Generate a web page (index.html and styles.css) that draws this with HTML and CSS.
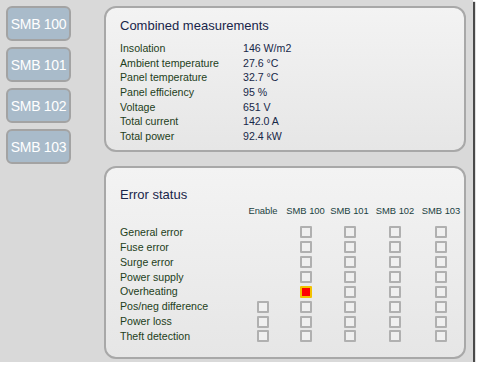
FILE: index.html
```html
<!DOCTYPE html>
<html lang="en">
<head>
    <meta charset="UTF-8">
    <title>SMB monitor</title>
    <link rel="stylesheet" href="styles.css">
</head>
<body>
<div class="frame">
    <div class="sidebar">
        <div class="smbbtn">SMB 100</div>
        <div class="smbbtn">SMB 101</div>
        <div class="smbbtn">SMB 102</div>
        <div class="smbbtn">SMB 103</div>
    </div>

    <div class="main">
        <div class="panel measure">
            <h2 class="ptitle">Combined measurements</h2>
            <div class="mrow"><span class="lbl">Insolation</span><span class="val">146 W/m2</span></div>
            <div class="mrow"><span class="lbl">Ambient temperature</span><span class="val">27.6 °C</span></div>
            <div class="mrow"><span class="lbl">Panel temperature</span><span class="val">32.7 °C</span></div>
            <div class="mrow"><span class="lbl">Panel efficiency</span><span class="val">95 %</span></div>
            <div class="mrow"><span class="lbl">Voltage</span><span class="val">651 V</span></div>
            <div class="mrow"><span class="lbl">Total current</span><span class="val">142.0 A</span></div>
            <div class="mrow"><span class="lbl">Total power</span><span class="val">92.4 kW</span></div>
        </div>

        <div class="panel errors">
            <h2 class="ptitle">Error status</h2>
            <div class="egrid head">
                <span></span><span>Enable</span><span>SMB 100</span><span>SMB 101</span><span>SMB 102</span><span>SMB 103</span>
            </div>
            <div class="erows">
                <div class="egrid"><span class="lbl">General error</span><span></span><span class="box"></span><span class="box"></span><span class="box"></span><span class="box"></span></div>
                <div class="egrid"><span class="lbl">Fuse error</span><span></span><span class="box"></span><span class="box"></span><span class="box"></span><span class="box"></span></div>
                <div class="egrid"><span class="lbl">Surge error</span><span></span><span class="box"></span><span class="box"></span><span class="box"></span><span class="box"></span></div>
                <div class="egrid"><span class="lbl">Power supply</span><span></span><span class="box"></span><span class="box"></span><span class="box"></span><span class="box"></span></div>
                <div class="egrid"><span class="lbl">Overheating</span><span></span><span class="box alarm"></span><span class="box"></span><span class="box"></span><span class="box"></span></div>
                <div class="egrid"><span class="lbl">Pos/neg difference</span><span class="box"></span><span class="box"></span><span class="box"></span><span class="box"></span><span class="box"></span></div>
                <div class="egrid"><span class="lbl">Power loss</span><span class="box"></span><span class="box"></span><span class="box"></span><span class="box"></span><span class="box"></span></div>
                <div class="egrid"><span class="lbl">Theft detection</span><span class="box"></span><span class="box"></span><span class="box"></span><span class="box"></span><span class="box"></span></div>
            </div>
        </div>
    </div>
</div>
</body>
</html>
```

FILE: styles.css
```css
body {
  margin: 0;
  background: #ffffff;
  font-family: "Liberation Sans", Arial, sans-serif;
}
.frame {
  width: 473px;
  height: 362px;
  background: #d9d9d9;
  box-shadow: 2px 2px 1px #4a4a4a;
  display: flex;
  align-items: flex-start;
  padding: 6px 0 0 6px;
  box-sizing: border-box;
}
.sidebar {
  width: 65px;
  display: flex;
  flex-direction: column;
  gap: 6px;
}
.smbbtn {
  height: 35px;
  box-sizing: border-box;
  background: #a9bbca;
  border: 2px solid #a3a3a3;
  border-radius: 6px;
  color: #ffffff;
  font-size: 14px;
  letter-spacing: -0.3px;
  display: flex;
  align-items: center;
  justify-content: center;
}
.main {
  margin-left: 33px;
  width: 362px;
  display: flex;
  flex-direction: column;
  gap: 14px;
}
.panel {
  flex-shrink: 0;
  box-sizing: border-box;
  border: 2px solid #a8a8a8;
  border-radius: 12px;
  background: linear-gradient(#f3f3f3, #e6e6e6);
  padding-left: 14px;
}
.measure {
  height: 146px;
  padding-top: 10px;
}
.errors {
  height: 193px;
  padding-top: 19px;
}
.ptitle {
  margin: 0;
  font-weight: normal;
  font-size: 13px;
  line-height: 16px;
  color: #18254a;
}
.measure .ptitle {
  margin-bottom: 7px;
}
.mrow {
  display: flex;
  font-size: 10.6px;
  line-height: 14.67px;
}
.lbl {
  color: #1d4020;
  font-size: 10.6px;
}
.mrow .lbl {
  width: 123px;
}
.val {
  color: #172848;
}
.egrid {
  display: grid;
  grid-template-columns: 122px 42px 43px 45px 46px 46px;
  align-items: center;
  justify-items: center;
  height: 14.86px;
}
.egrid .lbl {
  justify-self: start;
  line-height: 14.86px;
}
.head {
  font-size: 9.4px;
  color: #1b4242;
  height: 15px;
  line-height: 15px;
  margin-bottom: 7px;
}
.box {
  width: 12px;
  height: 12px;
  box-sizing: border-box;
  border: 2px solid #b0b0b0;
  border-radius: 1px;
  background: #f0f0f0;
}
.box.alarm {
  background: #ff0000;
  border-color: #f2c200;
}
```
